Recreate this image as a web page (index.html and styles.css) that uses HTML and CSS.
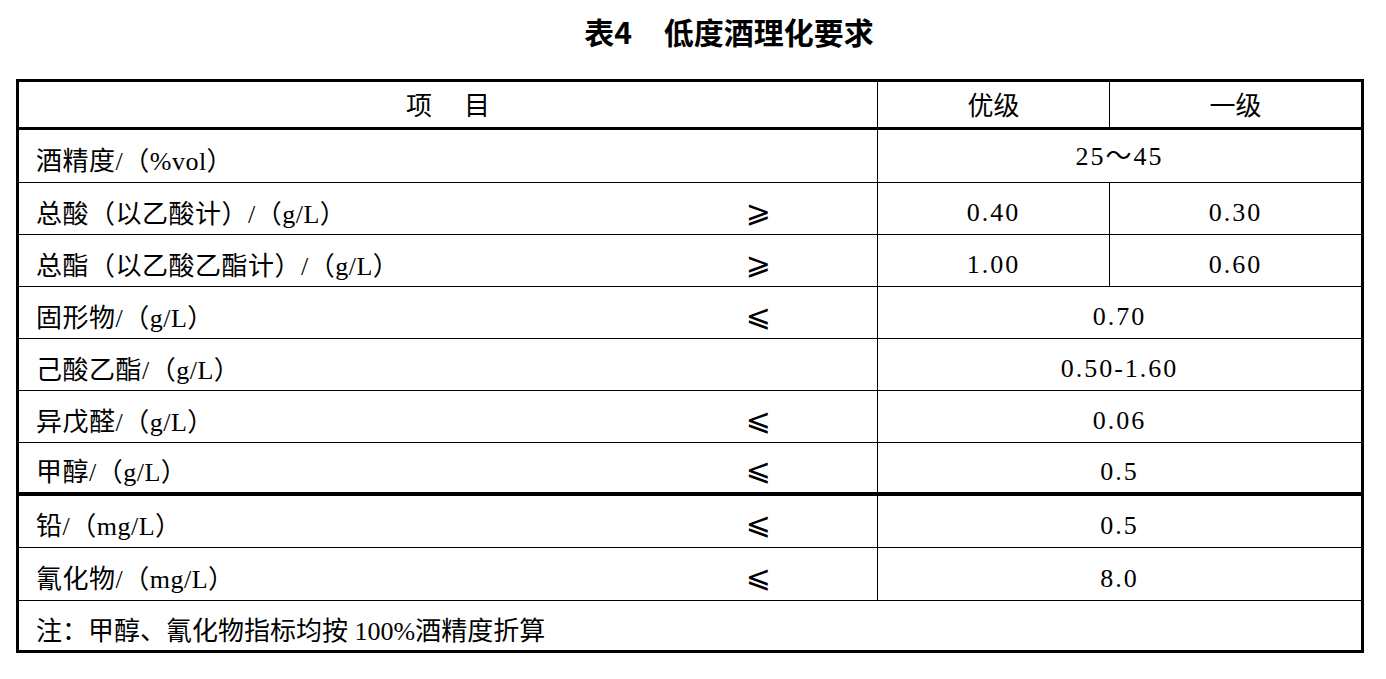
FILE: index.html
```html
<!DOCTYPE html>
<html lang="zh-CN">
<head>
<meta charset="utf-8">
<title>表4 低度酒理化要求</title>
<link rel="stylesheet" href="styles.css">
</head>
<body>
<h1 class="title">表4<span class="gap"></span>低度酒理化要求</h1>
<table class="spec">
  <colgroup>
    <col class="c-name">
    <col class="c-sym">
    <col class="c-a">
    <col class="c-b">
  </colgroup>
  <thead>
    <tr class="r-head">
      <th colspan="2">项<span class="sp"></span>目</th>
      <th>优级</th>
      <th>一级</th>
    </tr>
  </thead>
  <tbody>
    <tr class="r-first">
      <td class="name">酒精度/（%vol）</td>
      <td class="sym"></td>
      <td class="val val-first" colspan="2">25～45</td>
    </tr>
    <tr class="r-std">
      <td class="name">总酸（以乙酸计）/（g/L）</td>
      <td class="sym">⩾</td>
      <td class="val">0.40</td>
      <td class="val">0.30</td>
    </tr>
    <tr class="r-std">
      <td class="name">总酯（以乙酸乙酯计）/（g/L）</td>
      <td class="sym">⩾</td>
      <td class="val">1.00</td>
      <td class="val">0.60</td>
    </tr>
    <tr class="r-std">
      <td class="name">固形物/（g/L）</td>
      <td class="sym">⩽</td>
      <td class="val" colspan="2">0.70</td>
    </tr>
    <tr class="r-std">
      <td class="name">己酸乙酯/（g/L）</td>
      <td class="sym"></td>
      <td class="val" colspan="2">0.50-1.60</td>
    </tr>
    <tr class="r-std">
      <td class="name">异戊醛/（g/L）</td>
      <td class="sym">⩽</td>
      <td class="val" colspan="2">0.06</td>
    </tr>
    <tr class="r-group-end">
      <td class="name">甲醇/（g/L）</td>
      <td class="sym">⩽</td>
      <td class="val" colspan="2">0.5</td>
    </tr>
    <tr class="r-after-group">
      <td class="name">铅/（mg/L）</td>
      <td class="sym">⩽</td>
      <td class="val" colspan="2">0.5</td>
    </tr>
    <tr class="r-cn">
      <td class="name">氰化物/（mg/L）</td>
      <td class="sym">⩽</td>
      <td class="val" colspan="2">8.0</td>
    </tr>
    <tr class="r-note">
      <td class="name note" colspan="4">注：甲醇、氰化物指标均按 100%酒精度折算</td>
    </tr>
  </tbody>
</table>
</body>
</html>
```

FILE: styles.css
```css
html, body {
  margin: 0;
  padding: 0;
  background: #ffffff;
  color: #000000;
}

body {
  font-family: "Liberation Serif", "Noto Sans CJK SC", serif;
}

.title {
  margin: 0 0 17px;
  height: 62px;
  line-height: 62px;
  padding-left: 72px;
  text-align: center;
  font-family: "Noto Sans CJK SC", sans-serif;
  font-size: 30px;
  font-weight: 700;
}

.title .gap {
  display: inline-block;
  width: 32px;
}

.spec {
  margin-left: 16px;
  width: 1348px;
  border-collapse: collapse;
  table-layout: fixed;
  border: 3px solid #000;
  font-size: 26px;
}

.c-name { width: 620px; }
.c-sym { width: 240px; }
.c-a { width: 232px; }
.c-b { width: auto; }

.spec th,
.spec td {
  padding: 5px 0 0;
  vertical-align: middle;
  font-weight: 400;
  border-top: 1px solid #000;
  border-bottom: 1px solid #000;
}

.spec th {
  text-align: center;
  border-left: 1px solid #000;
}

.spec th .sp {
  display: inline-block;
  width: 32px;
}

.r-head { height: 48px; }
.r-head th { border-bottom: 3px solid #000; padding: 0 0 3px; }
.r-first { height: 54px; }
.r-std { height: 52px; }
.r-group-end { height: 51px; }
.r-group-end td { border-bottom: 4px solid #000; }
.r-after-group { height: 54px; }
.r-cn { height: 53px; }
.r-note { height: 51px; }

.spec td.name {
  padding-left: 17px;
  text-align: left;
  white-space: nowrap;
  letter-spacing: 0.5px;
}

.spec td.note {
  letter-spacing: 0;
}

.spec td.sym {
  text-align: center;
  padding-left: 2px;
  font-family: "DejaVu Sans", sans-serif;
  font-size: 30px;
}

.spec td.val {
  text-align: center;
  padding-top: 9px;
  border-left: 1px solid #000;
  letter-spacing: 2px;
}

.spec td.val-first {
  padding: 0 0 6px;
}
```
